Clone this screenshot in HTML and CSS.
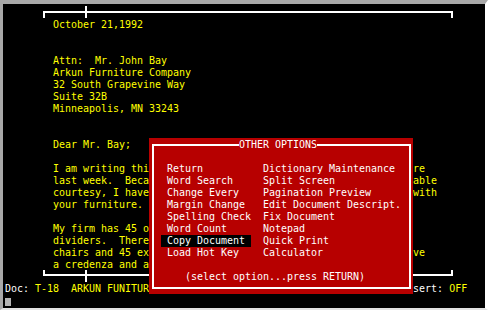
FILE: index.html
```html
<!DOCTYPE html>
<html lang="en">
<head>
    <meta charset="UTF-8">
    <title>Word Processor - Other Options</title>
    <link rel="stylesheet" href="styles.css">
</head>
<body>
    <div class="window">
        <!-- Ruler arriba -->
        <svg class="ruler" width="480" height="12">
            <rect x="38" y="4" width="410" height="2" />
            <rect x="38" y="4" width="2" height="7" />
            <rect x="80" y="-1" width="2" height="12" />
            <rect x="446" y="4" width="2" height="7" />
        </svg>

        <div class="letter">
            <div class="line">October 21,1992</div>
            <div class="line"></div>
            <div class="line"></div>
            <div class="line">Attn:  Mr. John Bay</div>
            <div class="line">Arkun Furniture Company</div>
            <div class="line">32 South Grapevine Way</div>
            <div class="line">Suite 32B</div>
            <div class="line">Minneapolis, MN 33243</div>
            <div class="line"></div>
            <div class="line"></div>
            <div class="line">Dear Mr. Bay;</div>
            <div class="line"></div>
            <div class="line">I am writing this letter to inquire about the office furniture</div>
            <div class="line">last week.  Because your staff was so helpful and very agreeable</div>
            <div class="line">courtesy, I have decided to buy all our office supplies and with</div>
            <div class="line">your furniture.</div>
            <div class="line"></div>
            <div class="line">My firm has 45 offices that require new furniture and</div>
            <div class="line">dividers.  Therefore, I would like to order 45 desks,</div>
            <div class="line">chairs and 45 executive tables.  We would also like to receive</div>
            <div class="line">a credenza and a bookcase for each office.</div>
        </div>

        <!-- Ruler abajo -->
        <svg class="ruler" width="480" height="12">
            <rect x="38" y="3" width="410" height="2" />
            <rect x="38" y="-1" width="2" height="6" />
            <rect x="80" y="-1" width="2" height="12" />
            <rect x="446" y="-1" width="2" height="6" />
        </svg>

        <div class="status line"><span class="label">Doc: </span><span class="doc-name">T-18  ARKUN FUNITURE LETTER</span><span class="label">Insert: </span>OFF</div>
        <div class="command"><span class="cursor"></span></div>

        <!-- Menu emergente -->
        <div class="popup">
            <div class="popup-title line"><span>OTHER OPTIONS</span></div>
            <div class="menu">
                <div class="item">Return</div>
                <div class="item">Dictionary Maintenance</div>
                <div class="item">Word Search</div>
                <div class="item">Split Screen</div>
                <div class="item">Change Every</div>
                <div class="item">Pagination Preview</div>
                <div class="item">Margin Change</div>
                <div class="item">Edit Document Descript.</div>
                <div class="item">Spelling Check</div>
                <div class="item">Fix Document</div>
                <div class="item">Word Count</div>
                <div class="item">Notepad</div>
                <div class="item selected">Copy Document</div>
                <div class="item">Quick Print</div>
                <div class="item">Load Hot Key</div>
                <div class="item">Calculator</div>
            </div>
            <div class="popup-hint line">(select option...press RETURN)</div>
        </div>
    </div>
</body>
</html>
```

FILE: styles.css
```css
body {
    margin: 0;
    background: #ffffff;
}

.window {
    position: relative;
    width: 488px;
    height: 310px;
    box-sizing: border-box;
    border-style: solid;
    border-width: 4px 3px 2px 3px;
    border-color: #a8a8a8 #ffffff #e2e2e2 #a8a8a8;
    background: #000000;
    padding: 3px 0 0 2px;
    overflow: hidden;
    font-family: "DejaVu Sans Mono", monospace;
    font-size: 9.97px;
    color: #ffff00;
}

.line {
    height: 12px;
    line-height: 12px;
    white-space: pre;
}

.ruler {
    display: block;
    overflow: visible;
    fill: #ffffff;
}

.letter {
    padding-left: 8ch;
}

/* Linea de estado */
.status .label {
    color: #ffffff;
}

.status .doc-name {
    display: inline-block;
    width: 61ch;
}

.command {
    display: flex;
    height: 12px;
}

.cursor {
    width: 6px;
    height: 8px;
    margin-top: 3px;
    background: #b4b4b4;
}

/* Ventana de opciones */
.popup {
    position: absolute;
    left: 146px;
    top: 134px;
    width: 264px;
    height: 156px;
    box-sizing: border-box;
    padding-top: 1px;
    background: #b70000;
    color: #ffffff;
}

.popup::before {
    content: "";
    position: absolute;
    left: 3px;
    top: 6px;
    right: 2px;
    bottom: 5px;
    border: 2px solid #ffffff;
}

.popup-title {
    position: relative;
    padding-left: 15ch;
}

.popup-title span {
    background: #b70000;
}

.menu {
    margin: 12px 0 0 2ch;
    display: grid;
    grid-template-columns: 15ch auto;
    column-gap: 2ch;
}

.item {
    height: 12px;
    line-height: 12px;
    padding-left: 1ch;
    white-space: pre;
}

.item:nth-child(even) {
    padding-left: 0;
}

.item.selected {
    background: #000000;
}

.popup-hint {
    margin-top: 12px;
    padding-left: 6ch;
}
```
